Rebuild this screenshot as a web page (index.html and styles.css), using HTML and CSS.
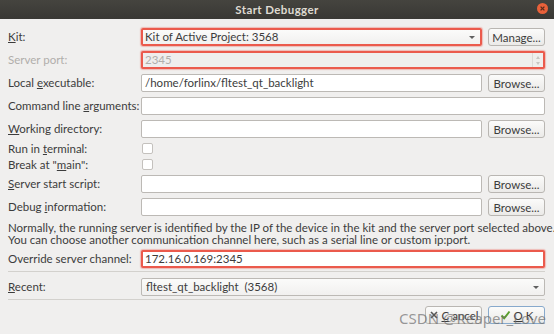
FILE: index.html
```html
<!DOCTYPE html>
<html lang="en">
<head>
  <meta charset="UTF-8">
  <meta name="viewport" content="width=device-width, initial-scale=1.0">
  <title>Start Debugger</title>
  <link rel="stylesheet" href="styles.css">
</head>
<body>
<div class="window">
  <header class="titlebar">
    <span class="title">Start Debugger</span>
    <span class="close"><svg width="11" height="11" viewBox="0 0 11 11"><circle cx="5.5" cy="5.5" r="5.5" fill="#e9613a"/><path d="M3.6 3.6 L7.4 7.4 M7.4 3.6 L3.6 7.4" stroke="#5a2a1a" stroke-width="1.3"/></svg></span>
  </header>

  <main class="dialog">
    <div class="form">
      <label class="lbl"><u>K</u>it:</label>
      <div class="field">
        <div class="combo marked">Kit of Active Project: 3568<span class="arrow"></span></div>
        <button class="btn">Manage...</button>
      </div>

      <label class="lbl disabled">Server port:</label>
      <div class="field">
        <div class="edit spin marked disabled">2345<span class="spin-arrows"><i class="up"></i><i class="down"></i></span></div>
      </div>

      <label class="lbl">Local <u>e</u>xecutable:</label>
      <div class="field">
        <div class="edit">/home/forlinx/fltest_qt_backlight</div>
        <button class="btn">Browse...</button>
      </div>

      <label class="lbl">Command line <u>a</u>rguments:</label>
      <div class="field">
        <div class="edit"></div>
      </div>

      <label class="lbl"><u>W</u>orking directory:</label>
      <div class="field">
        <div class="edit"></div>
        <button class="btn">Browse...</button>
      </div>

      <label class="lbl short">Run in <u>t</u>erminal:</label>
      <div class="field short"><span class="check"></span></div>

      <label class="lbl short">Break at "<u>m</u>ain":</label>
      <div class="field short"><span class="check"></span></div>

      <label class="lbl"><u>S</u>erver start script:</label>
      <div class="field">
        <div class="edit"></div>
        <button class="btn">Browse...</button>
      </div>

      <label class="lbl">Debug <u>i</u>nformation:</label>
      <div class="field">
        <div class="edit"></div>
        <button class="btn">Browse...</button>
      </div>
    </div>

    <p class="note">Normally, the running server is identified by the IP of the device in the kit and the server port selected above.<br>You can choose another communication channel here, such as a serial line or custom ip:port.</p>

    <div class="form">
      <label class="lbl">Override server channel:</label>
      <div class="field">
        <div class="edit marked">172.16.0.169:2345</div>
      </div>
    </div>

    <hr class="sep">

    <div class="form">
      <label class="lbl"><u>R</u>ecent:</label>
      <div class="field">
        <div class="combo">fltest_qt_backlight&nbsp; (3568)<span class="arrow"></span></div>
      </div>
    </div>

    <hr class="sep">

    <div class="buttons">
      <button class="btn">
        <svg width="10" height="10" viewBox="0 0 10 10"><path d="M2 2 L8 8 M8 2 L2 8" stroke="#555" stroke-width="1.6"/></svg>
        <u>C</u>ancel
      </button>
      <button class="btn default">
        <svg width="11" height="10" viewBox="0 0 11 10"><path d="M1.5 5.5 L4.2 8.3 L9.5 1.5" fill="none" stroke="#5aa02c" stroke-width="2"/></svg>
        <u>O</u>K
      </button>
    </div>

    <div class="watermark">CSDN @Reaper_Love</div>
  </main>
</div>
</body>
</html>
```

FILE: styles.css
```css
body {
  margin: 0;
  font-family: Lato, 'Noto Sans', sans-serif;
  font-size: 11.5px;
  color: #3c3c3c;
  background-color: #f0efee;
}

.window {
  width: 554px;
  height: 334px;
  overflow: hidden;
  position: relative;
}

.titlebar {
  height: 19px;
  background: linear-gradient(#45443f, #393834);
  display: flex;
  align-items: center;
  justify-content: center;
  position: relative;
}

.title {
  color: #dfdbd2;
  font-weight: bold;
  font-size: 11.5px;
  letter-spacing: 0.4px;
}

.close {
  position: absolute;
  right: 6px;
  top: 3px;
  height: 11px;
}

.dialog {
  padding: 9px 9px 0 8px;
}

.form {
  display: grid;
  grid-template-columns: 128px minmax(0, 1fr);
  column-gap: 5px;
  row-gap: 5px;
  align-items: center;
}

.lbl {
  white-space: nowrap;
  line-height: 18px;
}

.lbl.short {
  line-height: 11px;
}

.lbl u, .btn u {
  text-decoration-thickness: 1px;
  text-underline-offset: 1px;
}

.disabled {
  color: #b0aeab;
}

.field {
  display: flex;
  gap: 6px;
  height: 18px;
  min-width: 0;
}

.field.short {
  height: 11px;
}

.edit, .combo {
  flex: 1;
  min-width: 0;
  box-sizing: border-box;
  height: 18px;
  line-height: 16px;
  padding: 0 3px;
  border: 1px solid #bcb9b5;
  border-radius: 2px;
  background-color: #fff;
  white-space: nowrap;
  position: relative;
}

.combo {
  background: linear-gradient(#fbfbfa, #f1f0ef);
  padding-left: 4px;
}

.edit.disabled {
  background-color: #efeeed;
}

.marked {
  border: 2px solid #eb5a4c;
  box-shadow: 0 0 1px 1px rgba(235, 90, 76, 0.35);
  line-height: 14px;
  padding-left: 2px;
}

.arrow {
  position: absolute;
  right: 5px;
  top: 50%;
  margin-top: -1px;
  border-left: 3px solid transparent;
  border-right: 3px solid transparent;
  border-top: 3px solid #5f5f5f;
}

.spin-arrows {
  position: absolute;
  right: 1px;
  top: 0;
  bottom: 0;
  width: 9px;
  border-left: 1px solid #dcdad7;
  display: flex;
  flex-direction: column;
  justify-content: center;
  align-items: center;
  gap: 3px;
}

.spin-arrows i {
  border-left: 2.5px solid transparent;
  border-right: 2.5px solid transparent;
}

.spin-arrows .up {
  border-bottom: 3px solid #c8c6c3;
}

.spin-arrows .down {
  border-top: 3px solid #c8c6c3;
}

.check {
  width: 11px;
  height: 11px;
  box-sizing: border-box;
  margin-left: 1px;
  border: 1px solid #c4c1bd;
  border-radius: 2px;
  background-color: #fff;
}

.btn {
  flex: none;
  width: 57px;
  height: 18px;
  padding: 0;
  box-sizing: border-box;
  font: inherit;
  color: #3c3c3c;
  border: 1px solid #b9b6b2;
  border-radius: 3px;
  background: linear-gradient(#fbfbfa, #ebeae8);
  display: flex;
  align-items: center;
  justify-content: center;
  gap: 3px;
}

.btn.default {
  border-color: #87a9cc;
}

.note {
  margin: 6px 0 4px;
  line-height: 12px;
  white-space: nowrap;
}

.sep {
  margin: 3px 0 6px;
  border: 0;
  border-top: 1px solid #d3d1cd;
}

.buttons {
  display: flex;
  justify-content: flex-end;
  gap: 6px;
  margin-top: 2px;
}

.watermark {
  position: absolute;
  left: 399px;
  top: 308px;
  font-family: 'Noto Sans', sans-serif;
  font-size: 15px;
  color: rgba(110, 110, 110, 0.7);
  white-space: nowrap;
}
```
